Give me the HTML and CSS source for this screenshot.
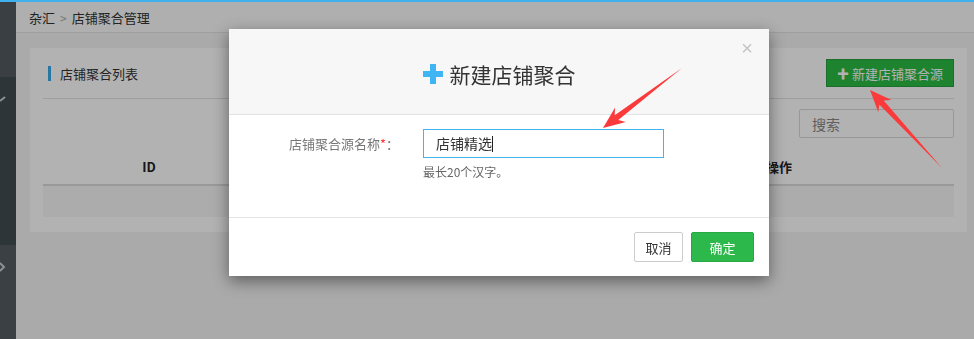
FILE: index.html
```html
<!DOCTYPE html>
<html lang="zh-CN">
<head>
    <meta charset="utf-8">
    <title>店铺聚合管理</title>
    <link rel="stylesheet" href="styles.css">
</head>
<body>
    <div class="topline"></div>
    <div class="layout">
        <aside class="sidebar">
            <div class="side-top"></div>
            <div class="side-mid">
                <svg class="side-icon" width="8" height="8" viewBox="0 0 8 8"><path d="M0 7 L5 3" stroke="#c9cfd4" stroke-width="2" fill="none"/></svg>
            </div>
            <div class="side-bottom">
                <svg class="side-icon" width="8" height="10" viewBox="0 0 8 10"><path d="M0 1 L4 5 L0 9" stroke="#c9cfd4" stroke-width="2" fill="none"/></svg>
            </div>
        </aside>
        <main class="main">
            <div class="breadcrumb">
                <span>杂汇</span>
                <span class="sep">&gt;</span>
                <span>店铺聚合管理</span>
            </div>
            <div class="content">
                <div class="panel">
                    <div class="panel-head">
                        <h3 class="panel-title">店铺聚合列表</h3>
                        <button class="btn-add"><span class="plus">&#10010;</span> 新建店铺聚合源</button>
                    </div>
                    <div class="toolbar">
                        <input type="text" class="search" placeholder="搜索">
                    </div>
                    <table class="list">
                        <thead>
                            <tr>
                                <th class="col-id">ID</th>
                                <th></th>
                                <th></th>
                                <th class="col-op">操作</th>
                            </tr>
                        </thead>
                        <tbody>
                            <tr><td colspan="4"></td></tr>
                        </tbody>
                    </table>
                </div>
            </div>
        </main>
    </div>

    <div class="mask"></div>

    <div class="modal">
        <div class="modal-header">
            <span class="close">&times;</span>
            <h2 class="modal-title">
                <svg class="title-plus" width="20" height="20" viewBox="0 0 20 20"><rect x="7" y="0" width="6" height="20" fill="#3fb6f3"/><rect x="0" y="7" width="20" height="6" fill="#3fb6f3"/></svg>
                新建店铺聚合
            </h2>
        </div>
        <div class="modal-body">
            <div class="form-row">
                <label class="form-label">店铺聚合源名称<span class="req">*</span>：</label>
                <div class="form-field">
                    <div class="name-input">店铺精选<span class="caret"></span></div>
                    <p class="help">最长20个汉字。</p>
                </div>
            </div>
        </div>
        <div class="modal-footer">
            <button class="btn-cancel">取消</button>
            <button class="btn-ok">确定</button>
        </div>
    </div>

    <!-- annotation arrows drawn on the screenshot -->
    <svg class="marks" width="974" height="339" viewBox="0 0 974 339">
        <polygon fill="#fb3b3b" points="682,68 618.3,120.1 625.9,121.9 603,128 615.1,107.5 614.7,115.3"/>
        <polygon fill="#fb3b3b" points="942,168 883.7,100.5 891.5,100.1 870,90 878.3,112.3 879.3,104.5"/>
    </svg>
</body>
</html>
```

FILE: styles.css
```css
/* page styles */

body {
    margin: 0;
    padding: 0;
    width: 974px;
    height: 339px;
    overflow: hidden;
    font-family: "Noto Sans CJK SC", "Liberation Sans", sans-serif;
    font-size: 13px;
    color: #333;
    background-color: #f4f4f4;
}

.topline {
    position: relative;
    z-index: 20;
    height: 2px;
    background-color: #3fb2ee;
}

.layout {
    display: flex;
    height: 337px;
}

.sidebar {
    width: 16px;
    display: flex;
    flex-direction: column;
    flex-shrink: 0;
}

.side-top {
    height: 75px;
    background-color: #535b61;
}

.side-mid {
    height: 168px;
    background-color: #434c52;
    padding-top: 17px;
    box-sizing: border-box;
}

.side-bottom {
    flex: 1;
    background-color: #535c61;
    padding-top: 17px;
}

.side-icon {
    display: block;
}

.main {
    flex: 1;
    display: flex;
    flex-direction: column;
}

.breadcrumb {
    height: 31px;
    box-sizing: border-box;
    border-bottom: 1px solid #e3e3e3;
    background-color: #fbfbfb;
    padding-left: 13px;
    display: flex;
    align-items: center;
    gap: 5px;
    font-size: 13px;
    color: #333;
}

.breadcrumb .sep {
    color: #aaa;
    font-size: 12px;
}

.content {
    padding: 15px 7px 0 14px;
}

.panel {
    background-color: #fff;
    padding: 0 13px 15px;
}

.panel-head {
    height: 51px;
    box-sizing: border-box;
    border-bottom: 1px solid #e2e2e2;
    display: flex;
    align-items: center;
    justify-content: space-between;
}

.panel-title {
    margin: 0 0 0 5px;
    font-size: 13px;
    font-weight: normal;
    border-left: 3px solid #3aa9e8;
    padding-left: 9px;
    line-height: 15px;
}

.btn-add {
    height: 28px;
    width: 128px;
    border: 1px solid #289e40;
    background-color: #2bbc44;
    color: #fff;
    font-family: inherit;
    font-size: 13px;
    padding: 0;
}

.btn-add .plus {
    font-size: 12px;
}

.toolbar {
    display: flex;
    justify-content: flex-end;
    padding-top: 10px;
}

.search {
    width: 155px;
    height: 29px;
    box-sizing: border-box;
    border: 1px solid #d8d8d8;
    border-radius: 2px;
    padding: 0 12px;
    font-family: inherit;
    font-size: 14px;
}

.search::placeholder {
    color: #888;
}

.list {
    width: 100%;
    border-collapse: collapse;
    margin-top: 10px;
}

.list th {
    height: 36px;
    padding: 0;
    font-size: 13px;
    font-weight: bold;
    color: #222;
    border-bottom: 2px solid #dcdcdc;
    text-align: center;
}

.list .col-id {
    width: 212px;
}

.list .col-op {
    width: 352px;
    text-align: left;
    padding-left: 164px;
    box-sizing: border-box;
}

.list td {
    height: 31px;
    padding: 0;
    background-color: #f7f7f7;
}

/* modal */

.mask {
    position: fixed;
    left: 0;
    top: 0;
    width: 100%;
    height: 100%;
    z-index: 5;
    background-color: rgba(0, 0, 0, 0.3);
}

.modal {
    position: absolute;
    left: 229px;
    top: 29px;
    z-index: 10;
    width: 540px;
    background-color: #fff;
    box-shadow: 0 5px 15px rgba(0, 0, 0, 0.45);
}

.modal-header {
    position: relative;
    height: 86px;
    box-sizing: border-box;
    background-color: #f7f7f7;
    border-bottom: 1px solid #e3e3e3;
    display: flex;
    align-items: center;
    justify-content: center;
}

.modal-title {
    margin: 0;
    font-size: 21px;
    font-weight: normal;
    color: #333;
    display: flex;
    align-items: center;
    gap: 7px;
    padding-top: 4px;
}

.close {
    position: absolute;
    right: 16px;
    top: 8px;
    font-size: 20px;
    color: #c4c4c4;
    font-family: "Liberation Sans", sans-serif;
    cursor: pointer;
}

.modal-body {
    height: 103px;
    box-sizing: border-box;
    border-bottom: 1px solid #e3e3e3;
    padding-top: 14px;
}

.form-row {
    display: flex;
}

.form-label {
    width: 170px;
    text-align: right;
    color: #777;
    font-size: 13px;
    line-height: 29px;
    margin-right: 24px;
}

.req {
    color: #f33;
}

.name-input {
    width: 241px;
    height: 29px;
    box-sizing: border-box;
    border: 1px solid #41b4ee;
    padding-left: 12px;
    font-size: 14px;
    line-height: 27px;
    color: #333;
}

.caret {
    display: inline-block;
    width: 1px;
    height: 16px;
    background-color: #222;
    vertical-align: -3px;
}

.help {
    margin: 5px 0 0;
    font-size: 12px;
    color: #666;
}

.modal-footer {
    height: 58px;
    box-sizing: border-box;
    display: flex;
    justify-content: flex-end;
    align-items: center;
    gap: 8px;
    padding-right: 15px;
}

.btn-cancel,
.btn-ok {
    height: 30px;
    font-family: inherit;
    font-size: 13px;
    padding: 0;
    border-radius: 2px;
}

.btn-cancel {
    width: 49px;
    background-color: #fff;
    border: 1px solid #ccc;
    color: #333;
}

.btn-ok {
    width: 63px;
    background-color: #2db84c;
    border: 1px solid #28a745;
    color: #fff;
}

.marks {
    position: absolute;
    left: 0;
    top: 0;
    z-index: 30;
}
```
